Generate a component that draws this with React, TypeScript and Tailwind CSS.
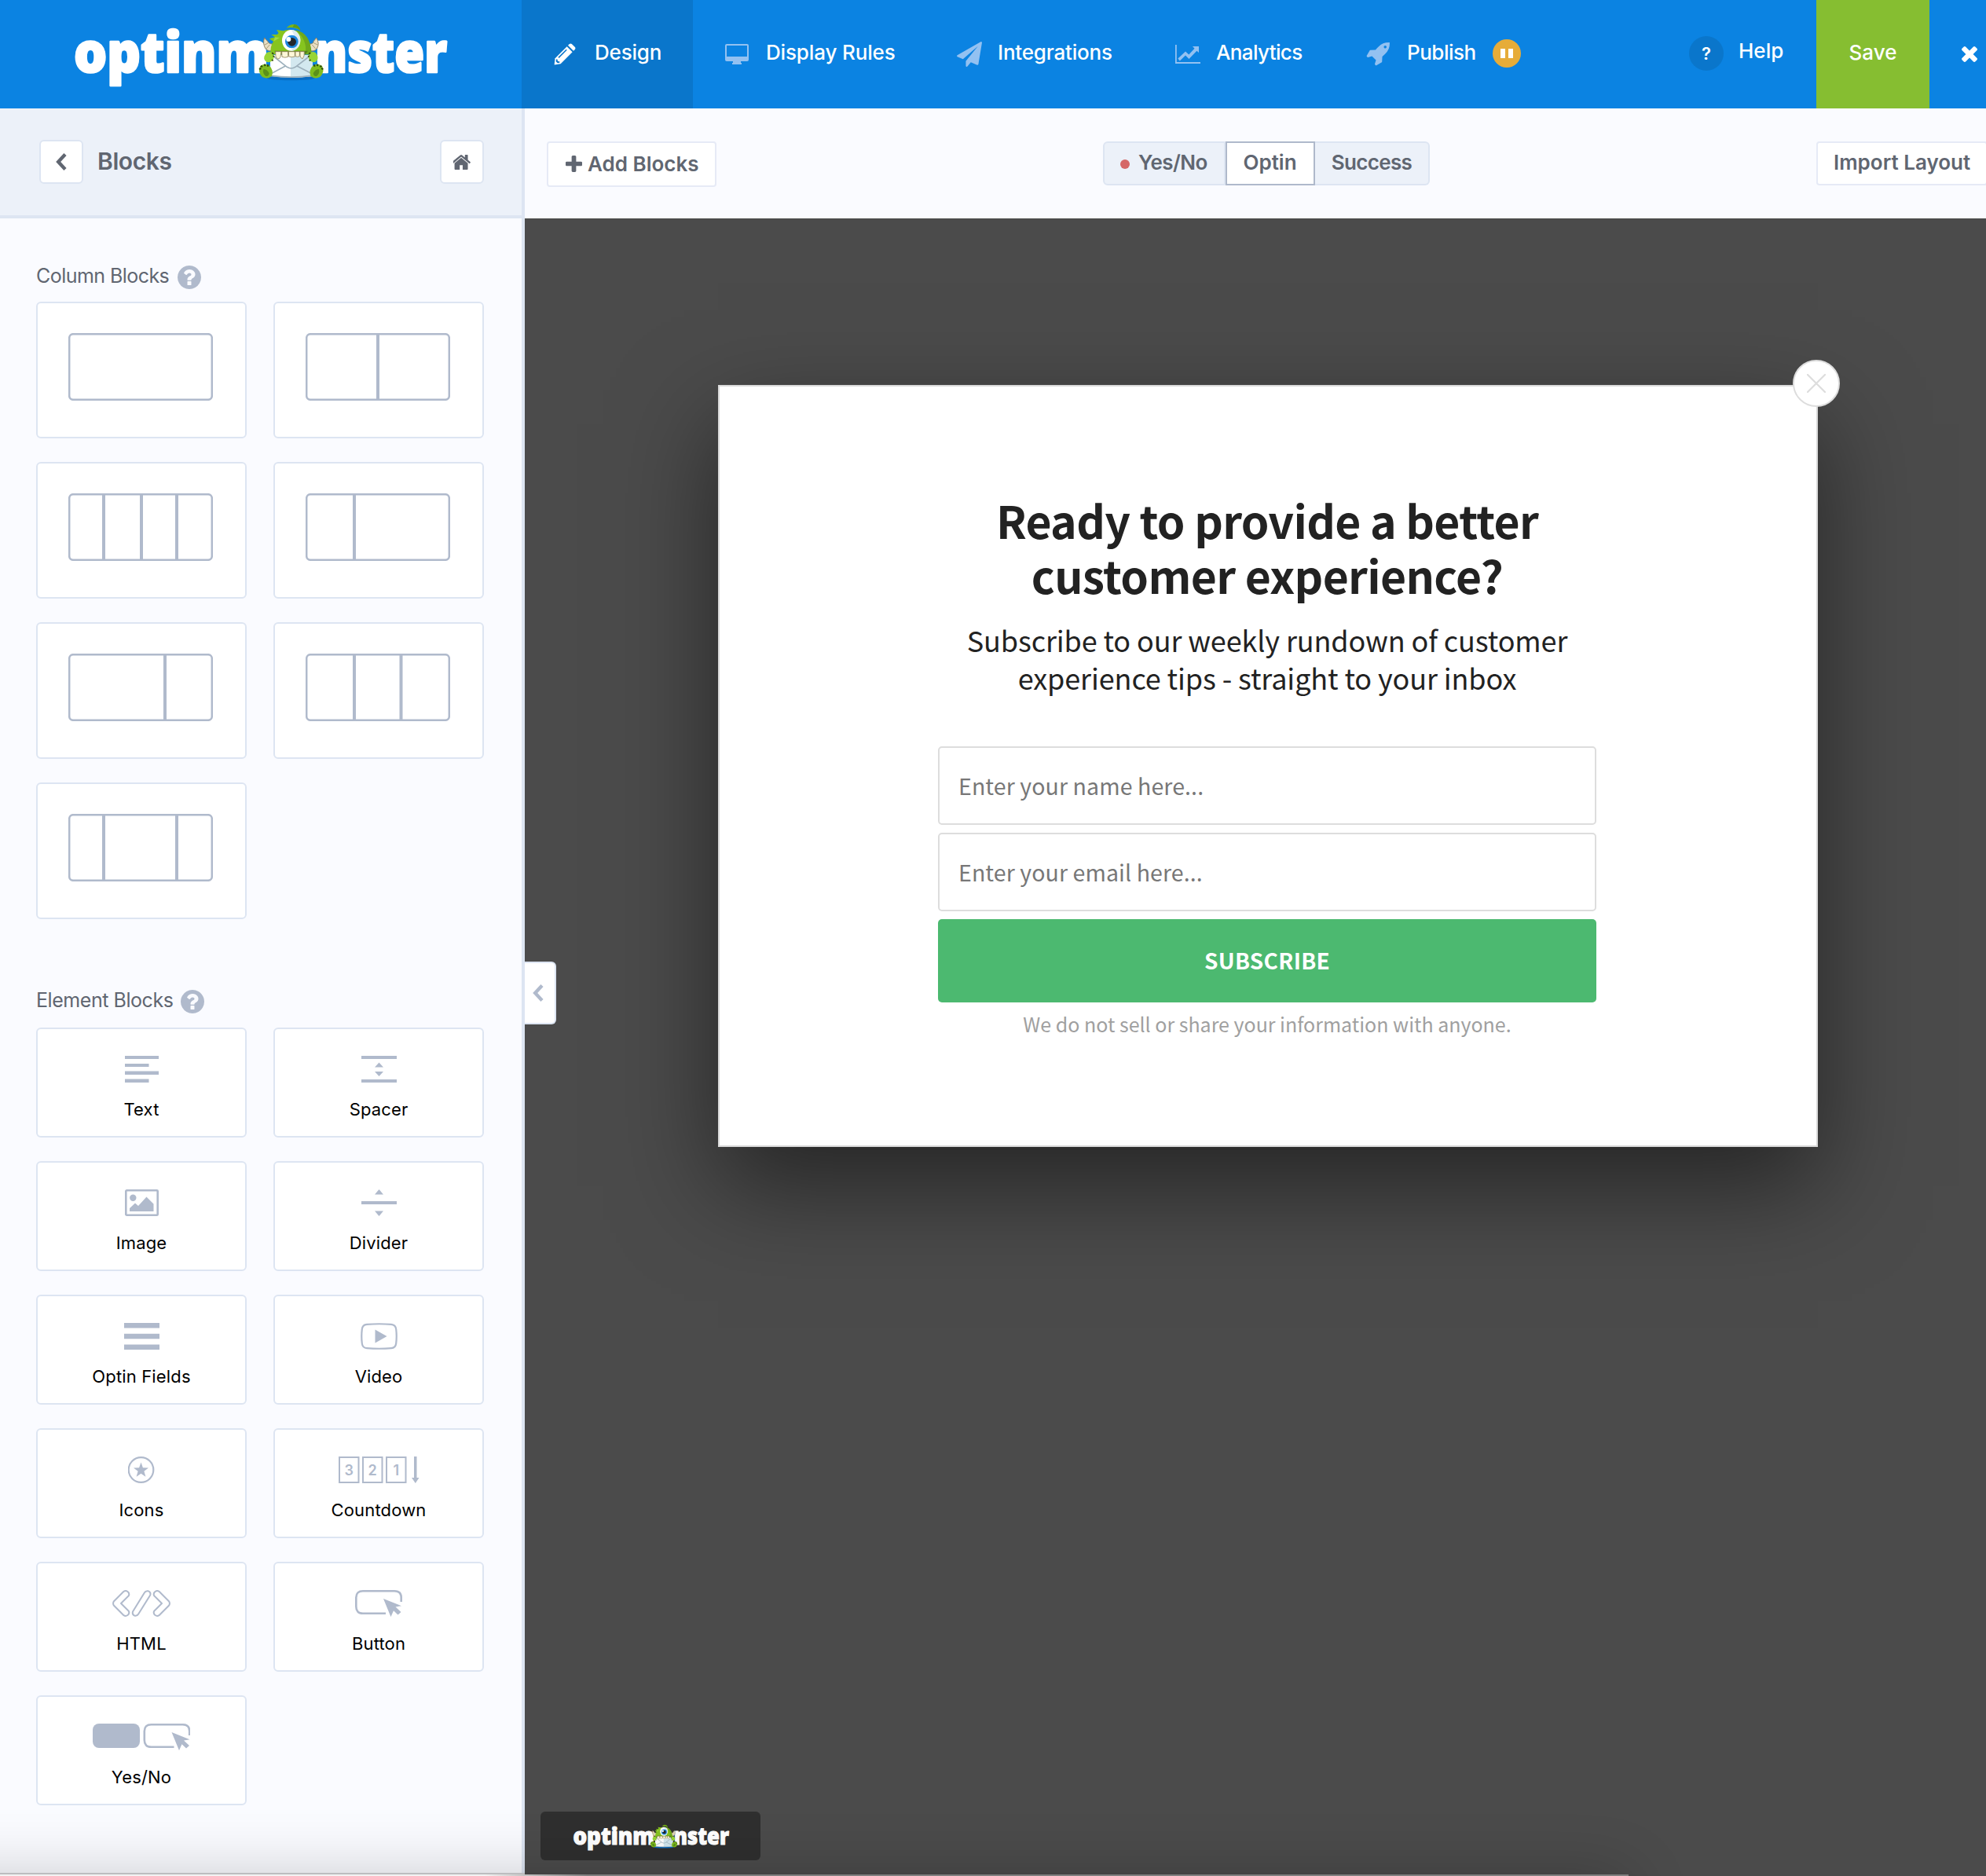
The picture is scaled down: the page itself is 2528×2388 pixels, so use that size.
import type { ReactNode } from 'react';

function Monster() {
  return (
    <g>
      <ellipse cx="150" cy="238" rx="92" ry="9" fill="#0a6dc2" />
      <path d="M134 47 Q144 33 163 33 Q183 36 187 56 Q162 40 134 47Z" fill="#7cb51c" />
      <path d="M163 33 Q183 36 187 56 Q176 44 158 44Z" fill="#5f9a17" />
      <path d="M50 84 Q42 106 54 126 Q68 140 84 132 L86 108 Q66 110 62 97 Q55 92 50 84Z" fill="#e9dfc4" stroke="#8d7f60" strokeWidth="3" />
      <path d="M248 84 Q262 106 250 126 Q238 140 222 132 L220 108 Q236 110 238 97 Q243 92 248 84Z" fill="#e9dfc4" stroke="#8d7f60" strokeWidth="3" />
      <path d="M50 112 L64 104 M56 127 L70 111 M254 112 L238 104 M246 127 L232 111" stroke="#a89a78" strokeWidth="3" />
      <path d="M74 148 Q70 118 84 98 L68 88 L90 82 L76 72 L98 72 L104 66 L96 54 L122 58 Q136 52 152 54 Q226 60 230 148Z" fill="#86c41f" />
      <path d="M168 55 Q226 64 230 148 L206 148 Q216 92 168 55Z" fill="#6fa81b" />
      <path d="M84 98 L108 84 L90 82Z" fill="#a3da46" />
      <path d="M72 150 H234 V230 Q152 242 72 230Z" fill="#ffffff" />
      <path d="M150 150 H234 V230 Q200 236 150 236Z" fill="#d3e8ef" />
      <path d="M72 226 Q152 238 234 226 V232 Q152 242 72 232Z" fill="#9eb1bc" />
      <path d="M78 150 L136 196 Q152 206 168 196 L228 150 M74 222 L130 192 M232 222 L174 192" fill="none" stroke="#9db0bc" strokeWidth="5" />
      <path d="M88 134 H216 L206 148 H96Z" fill="#54801a" />
      <path d="M92 137 h22 l-3 20 q-3 9 -10 8 q-6 -2 -8 -10Z M116 137 h24 v20 q-12 5 -23 0Z M142 137 h24 v19 q-12 4 -23 0Z M168 137 h16 v18 q-8 4 -16 0Z M186 137 h16 q2 18 -7 28 q-8 -4 -9 -12Z" fill="#fdf7d8" stroke="#93845c" strokeWidth="2.5" />
      <ellipse cx="152" cy="94" rx="35" ry="40" fill="#ffffff" />
      <path d="M152 54 a35 40 0 0 1 0 80 q30 -38 0 -80Z" fill="#dcebf2" />
      <circle cx="154" cy="99" r="25" fill="#1b86dd" />
      <circle cx="155" cy="100" r="16" fill="#23272c" />
      <circle cx="142" cy="90" r="9" fill="#ffffff" />
      <path d="M60 140 Q76 134 84 146 Q90 160 80 172 Q64 184 52 172 Q42 156 60 140Z" fill="#98d534" />
      <path d="M244 140 Q228 134 220 146 Q214 160 224 172 Q240 184 250 172 Q260 156 244 140Z" fill="#98d534" />
      <path d="M78 142 l7 4 M82 154 l6 2 M78 168 l5 4 M226 142 l-7 4 M222 154 l-6 2 M226 168 l-5 4" stroke="#2d4610" strokeWidth="5" />
      <path d="M34 192 Q52 180 68 190 Q86 208 78 230 Q62 244 42 234 Q22 214 34 192Z" fill="#7fbc1e" />
      <path d="M270 192 Q252 180 236 190 Q218 208 226 230 Q242 244 262 234 Q282 214 270 192Z" fill="#7fbc1e" />
      <path d="M46 204 Q60 204 68 220 Q66 234 54 230 Q42 222 46 204Z M258 204 Q244 204 236 220 Q238 234 250 230 Q262 222 258 204Z" fill="#5b901a" />
      <path d="M30 204 l7 -3 M36 191 l6 5 M50 185 l3 7 M64 187 l-2 7 M274 204 l-7 -3 M268 191 l-6 5 M254 185 l-3 7 M240 187 l2 7" stroke="#2d4610" strokeWidth="6" />
    </g>
  );
}

function Logo({ className }: { className: string }) {
  return (
    <svg viewBox="80 10 502 110" className={`shrink-0 overflow-visible ${className}`} fill="#fff">
      <g className="font-['Open_Sans'] text-[71px] font-extrabold" stroke="#fff" strokeWidth="2.600" strokeLinejoin="round">
        <text x="94" y="92" textLength="248" lengthAdjust="spacingAndGlyphs">optinm</text>
        <text x="401" y="92" textLength="168" lengthAdjust="spacingAndGlyphs">nster</text>
      </g>
      <g transform="translate(320 20) scale(.3333)"><Monster /></g>
    </svg>
  );
}

const PencilIcon = () => (
  <svg viewBox="0 0 28 28" className="size-7" fill="#fff">
    <path d="M16.6 4.2 L23.6 11.2 L8.6 26.2 L0.6 27.4 L1.6 19.2Z" />
    <path d="M18 2.8 L19.8 1 Q21.3 -.2 22.8 1 L26.9 5.1 Q28 6.6 26.8 8.1 L25 9.8Z" />
    <path d="M16.2 8.2 L6 18.4" stroke="#0a76cb" strokeWidth="1.6" />
    <path d="M3 20.6 L4.3 20.3 L5 22.8 L7.5 23.6 L7.2 24.9 L4.7 25.3 L2.6 23.2Z" fill="#0a76cb" />
  </svg>
);
const MonitorIcon = () => (
  <svg viewBox="0 0 30 26" className="h-[26px] w-[30px]" fill="#93c1f1">
    <path fillRule="evenodd" d="M2 0H28Q30 0 30 2V20Q30 22 28 22H20V24H21V26H9V24H10V22H2Q0 22 0 20V2Q0 0 2 0ZM2 2V16H28V2Z" />
  </svg>
);
const PlaneIcon = () => (
  <svg viewBox="0 0 1792 1792" className="h-8 w-8" fill="#93c1f1">
    <path d="M1764 11q33 24 27 64l-256 1536q-5 29-32 45-14 8-31 8-11 0-24-5l-453-185-242 295q-18 23-49 23-13 0-22-4-19-7-30.500-23.500t-11.500-36.500v-349l864-1059-1069 925-395-162q-37-14-40-55-2-40 32-59l1664-960q15-9 32-9 20 0 36 11z" />
  </svg>
);
const ChartIcon = () => (
  <svg viewBox="0 0 32 24" className="h-6 w-8" fill="#93c1f1">
    <path d="M0 0H1.800V22H32V24H0Z" />
    <path d="M22 2H30V10L27.400 7.700L17.500 18L13 13.500L5.800 20.500L3.400 17.600L13 8.400L17.300 12.600L24.500 4.800Z" />
  </svg>
);
const RocketIcon = () => (
  <svg viewBox="0 128 1664 1664" className="size-[30px]" fill="#93c1f1">
    <path d="M1440 448q0-40-28-68t-68-28-68 28-28 68 28 68 68 28 68-28 28-68zm224-288q0 249-75.500 430.500t-253.500 360.500q-81 80-195 176l-20 379q-2 16-16 26l-384 224q-7 4-16 4-12 0-23-9l-64-64q-13-14-8-32l85-276-281-281-276 85q-3 1-9 1-14 0-23-9l-64-64q-17-19-5-39l224-384q10-14 26-16l379-20q96-114 176-195 188-187 358-258t431-71q14 0 24 9.500t10 22.500z" />
  </svg>
);
const HelpCircle = () => (
  <svg viewBox="128 128 1536 1536" className="size-[30px] shrink-0" fill="#b0bacc">
    <path d="M1024 1376v-192q0-14-9-23t-23-9h-192q-14 0-23 9t-9 23v192q0 14 9 23t23 9h192q14 0 23-9t9-23zm256-672q0-88-55.500-163t-138.500-116-170-41q-243 0-371 213-15 24 8 42l132 100q7 6 19 6 16 0 25-12 53-68 86-92 34-24 86-24 48 0 85.500 26t37.500 59q0 38-20 61t-68 45q-63 28-115.500 86.500t-52.500 125.500v36q0 14 9 23t23 9h192q14 0 23-9t9-23q0-19 21.500-49.500t54.500-49.500q32-18 49-28.500t46-35 44.500-48 28-60.500 12.500-81zm384 192q0 209-103 385.500t-279.500 279.500-385.500 103-385.500-103-279.500-279.500-103-385.500 103-385.500 279.500-279.500 385.500-103 385.500 103 279.500 279.500 103 385.500z" />
  </svg>
);
const Chevron = ({ className }: { className: string }) => (
  <svg viewBox="0 0 14 22" className={className} fill="none" stroke="currentColor" strokeWidth="4.400">
    <path d="M12 1.600 L3.200 11 L12 20.400" />
  </svg>
);

function NavItem({ icon, label, className, children }: { icon: ReactNode; label: string; className: string; children?: ReactNode }) {
  return (
    <div className={`flex h-full items-center whitespace-nowrap pb-[4px] text-[26px] font-medium ${className}`}>
      <span className="flex w-[52px] shrink-0 pt-[4px]">{icon}</span>
      <span className="mb-[2px]">{label}</span>
      {children}
    </div>
  );
}

function Header() {
  return (
    <header className="flex h-[138px] shrink-0 bg-[#0b83e2] text-white">
      <div className="w-[664px] pl-[80px] pt-[10px]">
        <Logo className="h-[110px] w-[502px]" />
      </div>
      <NavItem icon={<PencilIcon />} label="Design" className="w-[218px] bg-[#0a76cb] pl-[41px] tracking-[-0.2px]" />
      <NavItem icon={<MonitorIcon />} label="Display Rules" className="w-[295px] pl-[41px] tracking-[-0.15px]" />
      <NavItem icon={<PlaneIcon />} label="Integrations" className="w-[279px] pl-[41px] tracking-[-0.2px]" />
      <NavItem icon={<ChartIcon />} label="Analytics" className="w-[242px] pl-[40px] tracking-[-0.65px]" />
      <NavItem icon={<RocketIcon />} label="Publish" className="pl-[41px] tracking-[-0.5px]">
        <span className="ml-[21px] mt-[2px] flex size-9 items-center justify-center gap-1 rounded-full bg-[#e6ac39]">
          <i className="h-3 w-[6px] bg-white" />
          <i className="h-3 w-[6px] bg-white" />
        </span>
      </NavItem>
      <div className="ml-auto flex items-center text-[26px] font-medium">
        <span className="mb-[2px] flex size-11 items-center justify-center rounded-full bg-[#0a76cb] text-[22px] font-semibold">?</span>
        <span className="mb-[9px] ml-[19px] w-[99px]">Help</span>
        <span className="flex h-full w-[144px] items-center justify-center bg-[#86be31] pb-[5px]">Save</span>
        <span className="flex w-[72px] justify-end pr-[11px]">
          <svg viewBox="302 366 1188 1188" className="size-[20px]" fill="#fff">
            <path d="M1490 1322q0 40-28 68l-136 136q-28 28-68 28t-68-28l-294-294-294 294q-28 28-68 28t-68-28l-136-136q-28-28-28-68t28-68l294-294-294-294q-28-28-28-68t28-68l136-136q28-28 68-28t68 28l294 294 294-294q28-28 68-28t68 28l136 136q28 28 28 68t-28 68l-294 294 294 294q28 28 28 68z" />
          </svg>
        </span>
      </div>
    </header>
  );
}

const columnLayouts: number[][] = [[], [92], [45, 93, 138], [62], [123], [62, 121.500], [45, 138]];

function ColumnCard({ dividers }: { dividers: number[] }) {
  return (
    <div className="h-[174px] rounded-[6px] border-2 border-[#dde5f2] bg-white pl-[39px] pt-[38px]">
      <svg viewBox="0 0 184 86" className="h-[86px] w-[184px]" fill="none" stroke="#b0bacc">
        <rect x="1.200" y="1.200" width="181.600" height="83.600" rx="5" strokeWidth="2.500" />
        {dividers.map((x) => (
          <path key={x} d={`M${x} 1V85`} strokeWidth="4" />
        ))}
      </svg>
    </div>
  );
}

const cursor = 'M0 0 L23 13.500 L15.500 15.600 L22.500 25 L18.500 30 L13 22.500 L9.500 34Z';

const elements: { label: string; w: number; icon: ReactNode }[] = [
  { label: 'Text', w: 43, icon: <path d="M0 0H43V4H0ZM0 10H30.500V14H0ZM0 19.500H43V24H0ZM0 29.500H30.500V34H0Z" /> },
  { label: 'Spacer', w: 45, icon: <path d="M0 0H45V4H0ZM0 30H45V34H0ZM17 14.500L22.500 8.500L28 14.500ZM17 20L22.500 26L28 20Z" /> },
  {
    label: 'Image', w: 43,
    icon: (
      <>
        <rect x="1.300" y="1.300" width="40.400" height="31.400" rx="1" fill="none" stroke="#b0bacc" strokeWidth="2.600" />
        <circle cx="10.300" cy="10.800" r="4.200" />
        <path d="M6 28V24L13 17.500L17 21L27.500 9.500L36.500 18.500V28Z" />
      </>
    ),
  },
  { label: 'Divider', w: 45, icon: <path d="M0 15H45V19H0ZM17 6.500L22.500 0L28 6.500ZM17 27.500L22.500 34L28 27.500Z" /> },
  { label: 'Optin Fields', w: 45, icon: <path d="M0 0H45V6.500H0ZM0 13.700H45V20.200H0ZM0 27.500H45V34H0Z" /> },
  {
    label: 'Video', w: 47,
    icon: (
      <>
        <path d="M8 1.800Q23.500 .7 39 1.800Q44.600 2.200 45.200 8Q46.300 17 45.200 26Q44.600 31.800 39 32.200Q23.500 33.300 8 32.200Q2.400 31.800 1.800 26Q.7 17 1.800 8Q2.400 2.200 8 1.800Z" fill="none" stroke="#b0bacc" strokeWidth="2.200" />
        <path d="M18.500 8.500L33.500 17L18.500 25.500Z" />
      </>
    ),
  },
  {
    label: 'Icons', w: 34,
    icon: (
      <>
        <circle cx="16.500" cy="17" r="15.800" fill="none" stroke="#b0bacc" strokeWidth="2.200" />
        <path transform="translate(-.5 0)" d="M17 7.500L19.400 14.200L26.500 14.400L20.900 18.800L22.900 25.800L17 21.700L11.100 25.800L13.100 18.800L7.500 14.400L14.600 14.200Z" />
      </>
    ),
  },
  {
    label: 'Countdown', w: 103,
    icon: (
      <>
        <path d="M1 1H25.500V33H1ZM31 1H55.500V33H31ZM61 1H85.500V33H61Z" fill="none" stroke="#b0bacc" strokeWidth="2" />
        <g className="text-[18px] font-semibold" textAnchor="middle">
          <text x="13.200" y="23.500">3</text>
          <text x="43.200" y="23.500">2</text>
          <text x="73.200" y="23.500">1</text>
        </g>
        <path d="M96 0H99.500V27H102.500L97.800 34L93 27H96Z" />
      </>
    ),
  },
  {
    label: 'HTML', w: 74,
    icon: (
      <g fill="none" stroke="#b0bacc" strokeWidth="2" strokeLinejoin="round">
        <path d="M14.500 1.800Q17 .3 19.500 2Q22.300 4.200 20.800 7.200L11 17L20.800 26.800Q22.300 29.800 19.500 32Q17 33.700 14.500 32.200L1.800 19.500Q.3 17 1.800 14.500Z" />
        <path d="M59.500 1.800Q57 .3 54.500 2Q51.700 4.200 53.200 7.200L63 17L53.200 26.800Q51.700 29.800 54.500 32Q57 33.700 59.500 32.200L72.200 19.500Q73.700 17 72.200 14.500Z" />
        <path d="M40.800 3.500Q42.300 .6 45.800 1.300Q49.400 2.800 48.200 6.500L33.200 30.500Q31.500 33.400 28.200 32.600Q25 31.200 26 27.500Z" />
      </g>
    ),
  },
  {
    label: 'Button', w: 60,
    icon: (
      <>
        <path d="M39 29.800H10Q1.300 29.800 1.300 21V9.500Q1.300 1.300 10 1.300H50Q58.700 1.300 58.700 9.500V15" fill="none" stroke="#b0bacc" strokeWidth="2.600" />
        <path transform="translate(36 11) scale(1 .68)" d={cursor} />
      </>
    ),
  },
  {
    label: 'Yes/No', w: 124,
    icon: (
      <>
        <rect width="60" height="31" rx="8" />
        <g transform="translate(64.500 0)">
          <path d="M39 29.800H10Q1.300 29.800 1.300 21V9.500Q1.300 1.300 10 1.300H50Q58.700 1.300 58.700 9.500V15" fill="none" stroke="#b0bacc" strokeWidth="2.600" />
          <path transform="translate(36 11) scale(1 .68)" d={cursor} />
        </g>
      </>
    ),
  },
];

function SectionTitle({ children, className }: { children: ReactNode; className: string }) {
  return (
    <div className="flex h-[30px] items-center pl-[46px]">
      <span className={`-mt-[2px] shrink-0 whitespace-nowrap text-[25px] text-[#606671] ${className}`}>{children}</span>
      <HelpCircle />
    </div>
  );
}

function Sidebar() {
  return (
    <aside className="flex w-[668px] shrink-0 flex-col border-r-4 border-[#dde5f2] bg-[#fafbff]">
      <div className="flex h-[140px] shrink-0 items-center border-b-4 border-[#dde5f2] bg-[#ecf1f9] pl-[50px] pr-[48px]">
        <div className="flex size-14 items-center justify-center rounded-[6px] border-2 border-[#dde5f2] bg-white text-[#606671]">
          <Chevron className="h-[22px] w-[14px]" />
        </div>
        <h1 className="mb-[3px] ml-[18px] text-[30px] font-semibold leading-10 tracking-[-0.4px] text-[#606671]">Blocks</h1>
        <div className="ml-auto flex size-14 items-center justify-center rounded-[6px] border-2 border-[#dde5f2] bg-white">
          <svg viewBox="150 250 1492 1290" className="mt-[1px] h-[19px] w-[22px]" fill="#606671">
            <path d="M1408 992v480q0 26-19 45t-45 19h-384v-384h-256v384h-384q-26 0-45-19t-19-45v-480q0-1 .5-3t.5-3l575-474 575 474q1 2 1 6zm223-69l-62 74q-8 9-21 11h-3q-13 0-21-7l-692-577-692 577q-12 8-24 7-13-2-21-11l-62-74q-8-10-7-23.500t11-21.500l719-599q32-26 76-26t76 26l244 204v-195q0-14 9-23t23-9h192q14 0 23 9t9 23v408l219 182q10 8 11 21.500t-7 23.500z" />
          </svg>
        </div>
      </div>
      <div className="pt-[60px]">
        <SectionTitle className="w-[180px] tracking-[-0.55px]">Column Blocks</SectionTitle>
        <div className="mt-4 grid grid-cols-[268px_268px] gap-x-[34px] gap-y-[30px] pl-[46px]">
          {columnLayouts.map((d, i) => (
            <ColumnCard key={i} dividers={d} />
          ))}
        </div>
      </div>
      <div className="pt-[90px]">
        <SectionTitle className="w-[184px] tracking-[-0.45px]">Element Blocks</SectionTitle>
        <div className="mt-[18px] grid grid-cols-[268px_268px] gap-x-[34px] gap-y-[30px] pl-[46px]">
          {elements.map((e) => (
            <div key={e.label} className="flex h-[140px] flex-col items-center rounded-[6px] border-2 border-[#dde5f2] bg-white pt-[34px]">
              <svg viewBox={`0 0 ${e.w} 34`} width={e.w} height="34" fill="#b0bacc">{e.icon}</svg>
              <span className="mt-[22px] text-[22px] leading-6 tracking-[0.15px] text-black">{e.label}</span>
            </div>
          ))}
        </div>
      </div>
    </aside>
  );
}

function Toolbar() {
  return (
    <div className="-mr-[2px] flex h-[140px] shrink-0 items-start justify-between bg-[#fafbff] pl-[28px] pt-[42px] text-[26px] font-semibold text-[#606671]">
      <div className="flex h-[58px] w-[216px] items-center rounded-[4px] border-2 border-[#e6eaf6] bg-white pl-[22px]">
        <svg viewBox="192 128 1408 1408" className="mb-[2px] size-[21px]" fill="#606671">
          <path d="M1600 736v192q0 40-28 68t-68 28h-416v416q0 40-28 68t-68 28h-192q-40 0-68-28t-28-68v-416h-416q-40 0-68-28t-28-68v-192q0-40 28-68t68-28h416v-416q0-40 28-68t68-28h192q40 0 68 28t28 68v416h416q40 0 68 28t28 68z" />
        </svg>
        <span className="mb-[2px] ml-[7px] whitespace-nowrap">Add Blocks</span>
      </div>
      <div className="flex h-14 w-[416px]">
        <div className="flex w-[156px] items-center rounded-l-[6px] border-2 border-[#dde5f2] bg-[#ecf1f9] pl-5">
          <i className="mt-[1px] size-3 rounded-full bg-[#d56868]" />
          <span className="mb-[3px] ml-[11px] tracking-[-0.55px]">Yes/No</span>
        </div>
        <div className="flex w-[114px] items-center justify-center border-2 border-[#afb9cb] bg-white pb-[3px] pr-[1px]">Optin</div>
        <div className="flex flex-1 items-center justify-center rounded-r-[6px] border-2 border-l-0 border-[#dde5f2] bg-[#ecf1f9] pb-[3px] tracking-[-0.65px]">Success</div>
      </div>
      <div className="flex h-14 w-[218px] items-center rounded-[4px] border-2 border-[#e6eaf6] bg-white pb-[3px] pl-[20px]">
        <span className="whitespace-nowrap">Import Layout</span>
      </div>
    </div>
  );
}

function Field({ children }: { children: ReactNode }) {
  return <div className="flex h-[100px] items-center rounded-[5px] border-2 border-[#ddd] bg-white pl-[24px] text-[28.5px] leading-10 tracking-[0.1px] text-[#777]">{children}</div>;
}

function Modal() {
  return (
    <div className="relative ml-[246px] mt-[212px] h-[970px] w-[1400px] border-2 border-[#d9d9d9] bg-white pt-[134px] text-center font-['Noto_Sans_CJK_SC',sans-serif] text-[#222] shadow-[0_50px_120px_rgba(0,0,0,0.5)]">
      <div className="absolute -top-[34px] right-[-30px] flex size-[60px] items-center justify-center rounded-full border-2 border-[#ddd] bg-white">
        <svg viewBox="0 0 24 24" className="size-6" stroke="#ddd" strokeWidth="2.200" strokeLinecap="round">
          <path d="M1 1L23 23M23 1L1 23" />
        </svg>
      </div>
      <h2 className="mr-[2px] text-[57px] font-bold leading-[70px] tracking-[-0.65px]">
        Ready to provide a better
        <br />
        customer experience?
      </h2>
      <p className="mr-[2px] mt-[24px] text-[36px] leading-[48px] tracking-[-0.12px]">
        Subscribe to our weekly rundown of customer
        <br />
        experience tips - straight to your inbox
      </p>
      <div className="ml-[278px] mt-[64px] flex w-[838px] flex-col gap-[10px] text-left">
        <Field>Enter your name here...</Field>
        <Field>Enter your email here...</Field>
        <button className="h-[106px] rounded-[5px] bg-[#4cb970] pb-[2px] text-[28px] font-bold tracking-[0.3px] text-white">SUBSCRIBE</button>
      </div>
      <p className="ml-[278px] mt-[9px] w-[838px] text-[25px] leading-9 text-[#a0a0a0]">We do not sell or share your information with anyone.</p>
    </div>
  );
}

export default function App() {
  return (
    <div className="relative flex h-[2388px] w-[2528px] flex-col overflow-hidden font-['Inter',sans-serif]">
      <Header />
      <div className="flex min-h-0 flex-1">
        <Sidebar />
        <main className="flex min-w-0 flex-1 flex-col">
          <Toolbar />
          <section className="relative min-h-0 flex-1 overflow-hidden bg-[#4b4b4b]">
            <div className="flex">
              <Modal />
            </div>
            <div className="absolute left-0 top-[946px] flex h-[80px] w-[40px] items-center rounded-r-[6px] border-2 border-l-0 border-[#dde5f2] bg-white pl-[10px] text-[#b0bacc]">
              <Chevron className="h-[22px] w-[14px]" />
            </div>
            <div className="absolute bottom-[20px] left-[20px] flex h-[62px] w-[280px] items-center justify-center rounded-[6px] bg-[#2f2f2f]">
              <Logo className="h-[46px] w-[211px]" />
            </div>
          </section>
        </main>
      </div>
      <div className="pointer-events-none absolute -bottom-[198px] -left-[100px] h-[200px] w-[2173px] bg-linear-to-r from-[#f2f2f2] from-[33%] to-[#808080] to-[39%] shadow-[0_0_80px_rgba(0,0,0,0.2)]" />
      <div className="pointer-events-none absolute bottom-[2px] left-0 h-[2px] w-[668px] bg-[#bcbdbf]" />
    </div>
  );
}
